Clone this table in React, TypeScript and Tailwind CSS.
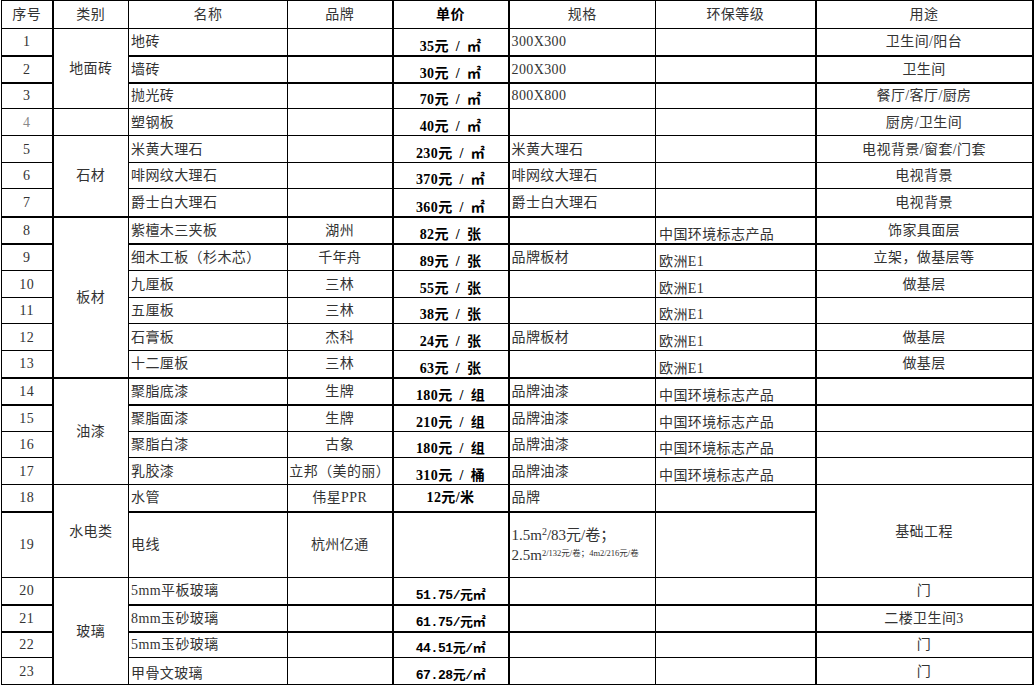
import React from 'react';

type Row = {
  no: string;
  cat: [string, number] | null;
  name: string;
  nameBottom?: boolean;
  brand?: string;
  price?: string;
  priceMono?: boolean;
  priceMiddle?: boolean;
  spec?: React.ReactNode;
  grade?: string;
  use: [string, number] | null;
  h: string;
  thick?: boolean;
  faint?: boolean;
};

const ROWS: Row[] = [
  { no: '1', cat: ['地面砖', 3], name: '地砖', price: '35元 / ㎡', spec: '300X300', use: ['卫生间/阳台', 1], h: 'h-[27px]', thick: true },
  { no: '2', cat: null, name: '墙砖', price: '30元 / ㎡', spec: '200X300', use: ['卫生间', 1], h: 'h-[27px]', thick: true },
  { no: '3', cat: null, name: '抛光砖', price: '70元 / ㎡', spec: '800X800', use: ['餐厅/客厅/厨房', 1], h: 'h-[26px]' },
  { no: '4', cat: ['', 1], name: '塑钢板', price: '40元 / ㎡', use: ['厨房/卫生间', 1], h: 'h-[27px]', faint: true },
  { no: '5', cat: ['石材', 3], name: '米黄大理石', price: '230元 / ㎡', spec: '米黄大理石', use: ['电视背景/窗套/门套', 1], h: 'h-[27px]' },
  { no: '6', cat: null, name: '啡网纹大理石', price: '370元 / ㎡', spec: '啡网纹大理石', use: ['电视背景', 1], h: 'h-[26px]' },
  { no: '7', cat: null, name: '爵士白大理石', price: '360元 / ㎡', spec: '爵士白大理石', use: ['电视背景', 1], h: 'h-[28px]', thick: true },
  { no: '8', cat: ['板材', 6], name: '紫檀木三夹板', brand: '湖州', price: '82元 / 张', grade: '中国环境标志产品', use: ['饰家具面层', 1], h: 'h-[27px]', thick: true },
  { no: '9', cat: null, name: '细木工板（杉木芯）', brand: '千年舟', price: '89元 / 张', spec: '品牌板材', grade: '欧洲E1', use: ['立架，做基层等', 1], h: 'h-[27px]' },
  { no: '10', cat: null, name: '九厘板', brand: '三林', price: '55元 / 张', grade: '欧洲E1', use: ['做基层', 1], h: 'h-[27px]' },
  { no: '11', cat: null, name: '五厘板', brand: '三林', price: '38元 / 张', grade: '欧洲E1', use: ['', 1], h: 'h-[26px]' },
  { no: '12', cat: null, name: '石膏板', brand: '杰科', price: '24元 / 张', spec: '品牌板材', grade: '欧洲E1', use: ['做基层', 1], h: 'h-[27px]' },
  { no: '13', cat: null, name: '十二厘板', brand: '三林', price: '63元 / 张', grade: '欧洲E1', use: ['做基层', 1], h: 'h-[27px]', thick: true },
  { no: '14', cat: ['油漆', 4], name: '聚脂底漆', brand: '生牌', price: '180元 / 组', spec: '品牌油漆', grade: '中国环境标志产品', use: ['', 1], h: 'h-[27px]', thick: true },
  { no: '15', cat: null, name: '聚脂面漆', brand: '生牌', price: '210元 / 组', spec: '品牌油漆', grade: '中国环境标志产品', use: ['', 1], h: 'h-[27px]' },
  { no: '16', cat: null, name: '聚脂白漆', brand: '古象', price: '180元 / 组', spec: '品牌油漆', grade: '中国环境标志产品', use: ['', 1], h: 'h-[26px]' },
  { no: '17', cat: null, name: '乳胶漆', brand: '立邦（美的丽）', price: '310元 / 桶', spec: '品牌油漆', grade: '中国环境标志产品', use: ['', 1], h: 'h-[27px]' },
  { no: '18', cat: ['水电类', 2], name: '水管', brand: '伟星PPR', price: '12元/米', priceMiddle: true, spec: '品牌', use: ['基础工程', 2], h: 'h-[27px]', thick: true },
  {
    no: '19',
    cat: null,
    name: '电线',
    brand: '杭州亿通',
    spec: (
      <div className="font-['Liberation_Serif','Noto_Sans_CJK_SC',serif] text-[15px] leading-[20px] tracking-normal">
        <div>
          1.5m<sup className="text-[10px]">2</sup>/83元/卷；
        </div>
        <div>
          2.5m<sup className="text-[8.5px]">2/132元/卷；4m2/216元/卷</sup>
        </div>
      </div>
    ),
    use: null,
    h: 'h-[66px]',
  },
  { no: '20', cat: ['玻璃', 4], name: '5mm平板玻璃', price: '51.75/元㎡', priceMono: true, use: ['门', 1], h: 'h-[27px]', thick: true },
  { no: '21', cat: null, name: '8mm玉砂玻璃', price: '61.75/元㎡', priceMono: true, use: ['二楼卫生间3', 1], h: 'h-[27px]', thick: true },
  { no: '22', cat: null, name: '5mm玉砂玻璃', price: '44.51元/㎡', priceMono: true, use: ['门', 1], h: 'h-[26px]' },
  { no: '23', cat: null, name: '甲骨文玻璃', nameBottom: true, price: '67.28元/㎡', priceMono: true, use: ['门', 1], h: 'h-[27px]' },
];

const HEADERS = ['序号', '类别', '名称', '品牌', '单价', '规格', '环保等级', '用途'];
// columns whose right edge is a heavy rule
const THICK_RIGHT = [true, false, false, true, true, false, true, true];

function cell(col: number, thick: boolean | undefined, extra: string): string {
  return [
    'border border-black p-0 whitespace-nowrap overflow-hidden',
    THICK_RIGHT[col] ? 'border-r-2' : '',
    thick ? 'border-b-2' : '',
    extra,
  ].join(' ');
}

export default function App(): React.ReactElement {
  return (
    <div className="w-[1034px] h-[687px] bg-white overflow-hidden">
      <table className="ml-px w-[1031px] table-fixed border-collapse font-['Liberation_Serif','Noto_Sans_CJK_SC',serif] text-[14px] tracking-[0.4px] text-[#333]">
        <colgroup>
          <col className="w-[51px]" />
          <col className="w-[76px]" />
          <col className="w-[159px]" />
          <col className="w-[105px]" />
          <col className="w-[116px]" />
          <col className="w-[147px]" />
          <col className="w-[160px]" />
          <col className="w-[217px]" />
        </colgroup>
        <thead>
          <tr className="h-[28px]">
            {HEADERS.map((h, i) => (
              <th
                key={h}
                className={cell(i, false, `text-center align-middle ${i === 4 ? 'font-bold text-black' : 'font-normal'}`)}
              >
                {h}
              </th>
            ))}
          </tr>
        </thead>
        <tbody>
          {ROWS.map((r, idx) => {
            const catThick = r.cat ? ROWS[idx + r.cat[1] - 1].thick : false;
            const useThick = r.use ? ROWS[idx + r.use[1] - 1].thick : false;
            return (
              <tr key={r.no} className={r.h}>
                <td className={cell(0, r.thick, `text-center align-middle ${r.faint ? 'text-[#888]' : ''}`)}>{r.no}</td>
                {r.cat && (
                  <td rowSpan={r.cat[1]} className={cell(1, catThick, 'text-center align-middle')}>
                    {r.cat[0]}
                  </td>
                )}
                <td className={cell(2, r.thick, `pl-[2px] text-left ${r.nameBottom ? 'align-bottom' : 'align-middle'}`)}>
                  {r.name}
                </td>
                <td className={cell(3, r.thick, 'text-center align-middle')}>{r.brand}</td>
                <td
                  className={cell(
                    4,
                    r.thick,
                    `text-center font-bold text-black ${r.priceMiddle ? 'align-middle' : 'align-bottom leading-[16px]'} ${
                      r.priceMono ? "font-['Liberation_Mono','Noto_Sans_CJK_SC',monospace] text-[13px] tracking-[-0.4px]" : '[word-spacing:3px]'
                    }`
                  )}
                >
                  {r.price}
                </td>
                <td className={cell(5, r.thick, 'pl-[2px] text-left align-middle')}>{r.spec}</td>
                <td className={cell(6, r.thick, 'pl-[3px] text-left align-bottom leading-[17px]')}>{r.grade}</td>
                {r.use && (
                  <td rowSpan={r.use[1]} className={cell(7, useThick, 'text-center align-middle')}>
                    {r.use[0]}
                  </td>
                )}
              </tr>
            );
          })}
        </tbody>
      </table>
    </div>
  );
}
